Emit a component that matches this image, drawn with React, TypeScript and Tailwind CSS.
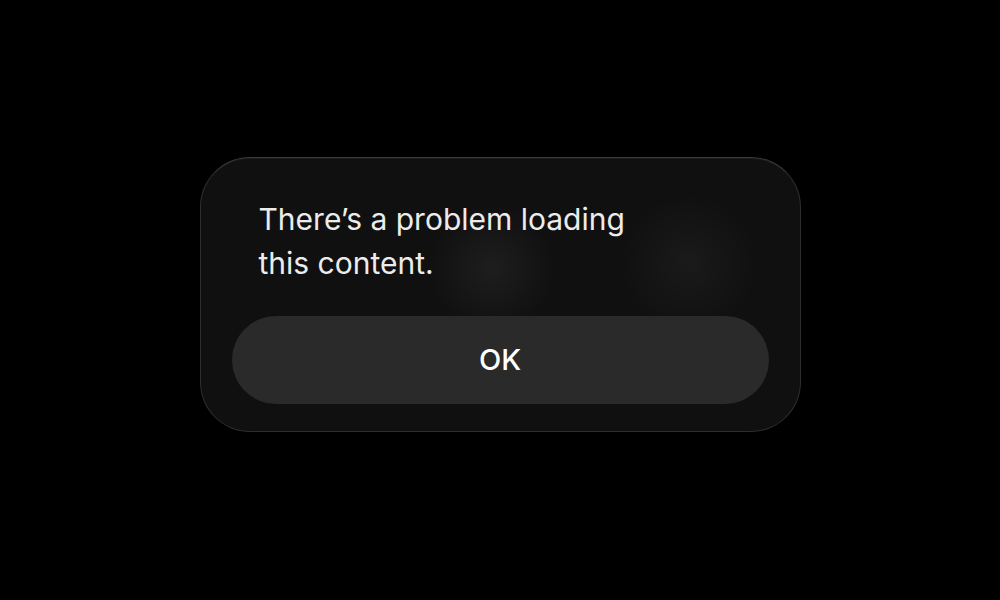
export default function App() {
  return (
    <div className="flex h-[600px] w-[1000px] items-center justify-center bg-black font-['Inter',sans-serif]">
      <div className="relative mt-[-12px] w-[601px] overflow-hidden rounded-[50px] border border-[#2e2e2e] border-t-[#3a3a3a] bg-[#101010] px-[31px] pb-[27px] pt-[39px] shadow-[inset_0_1px_0_rgba(255,255,255,0.05)]">
        <div className="pointer-events-none absolute left-[226px] top-[45px] h-[130px] w-[130px] rounded-full bg-[radial-gradient(circle,rgba(255,255,255,0.06),transparent_70%)]" />
        <div className="pointer-events-none absolute left-[418px] top-[35px] h-[140px] w-[140px] rounded-full bg-[radial-gradient(circle,rgba(255,255,255,0.045),transparent_70%)]" />
        <p className="relative px-[27px] text-[30px] leading-[44px] text-[#ececec]">
          There’s a problem loading
          <br />
          this content.
        </p>
        <button className="relative mt-[31px] flex h-[88px] w-full items-center justify-center rounded-full bg-[#2a2a2a] text-[29px] font-medium text-white">
          OK
        </button>
      </div>
    </div>
  );
}
